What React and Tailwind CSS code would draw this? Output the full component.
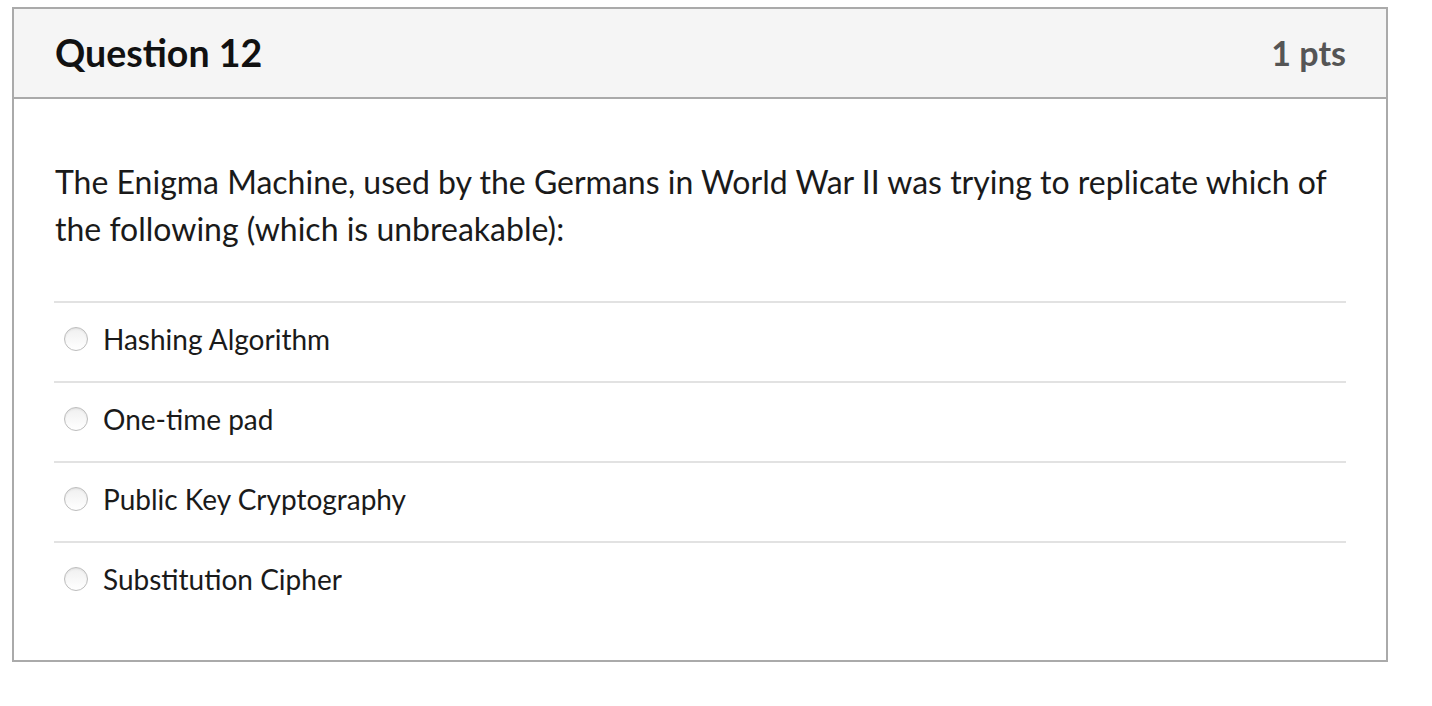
import React from "react";

const options = ["Hashing Algorithm", "One-time pad", "Public Key Cryptography", "Substitution Cipher"];

function Radio() {
  return (
    <span className="inline-block w-[24px] h-[24px] rounded-full border border-[#bdbdbd] bg-gradient-to-b from-[#f0f0f0] to-white shadow-[inset_0_1px_2px_rgba(0,0,0,0.08)] shrink-0" />
  );
}

export default function App() {
  return (
    <div className="bg-white w-[1432px] h-[706px] pt-[7px] pl-[12px]" style={{ fontFamily: "Lato, 'Open Sans', sans-serif" }}>
      <div className="w-[1376px] h-[655px] border-2 border-[#aaaaaa] bg-white">
        <div className="h-[90px] bg-[#f5f5f5] border-b-2 border-[#aaaaaa] flex items-center justify-between pl-[41px] pr-[40px]">
          <div className="text-[37.5px] font-bold text-[#111] leading-none">Question 12</div>
          <div className="text-[34px] font-bold text-[#555] leading-none">1 pts</div>
        </div>
        <div className="px-[40px] pt-[59px]">
          <p className="text-[32px] leading-[47px] text-[#1a1a1a] pl-[1px]">
            The Enigma Machine, used by the Germans in World War II was trying to replicate which of the following (which is unbreakable):
          </p>
          <div className="mt-[49px]">
            {options.map((o) => (
              <div key={o} className="h-[80px] border-t-2 border-[#e2e2e2] flex items-center pl-[10px] gap-[15px] pb-[7px]">
                <Radio />
                <span className="text-[28px] text-[#1a1a1a]">{o}</span>
              </div>
            ))}
          </div>
        </div>
      </div>
    </div>
  );
}
